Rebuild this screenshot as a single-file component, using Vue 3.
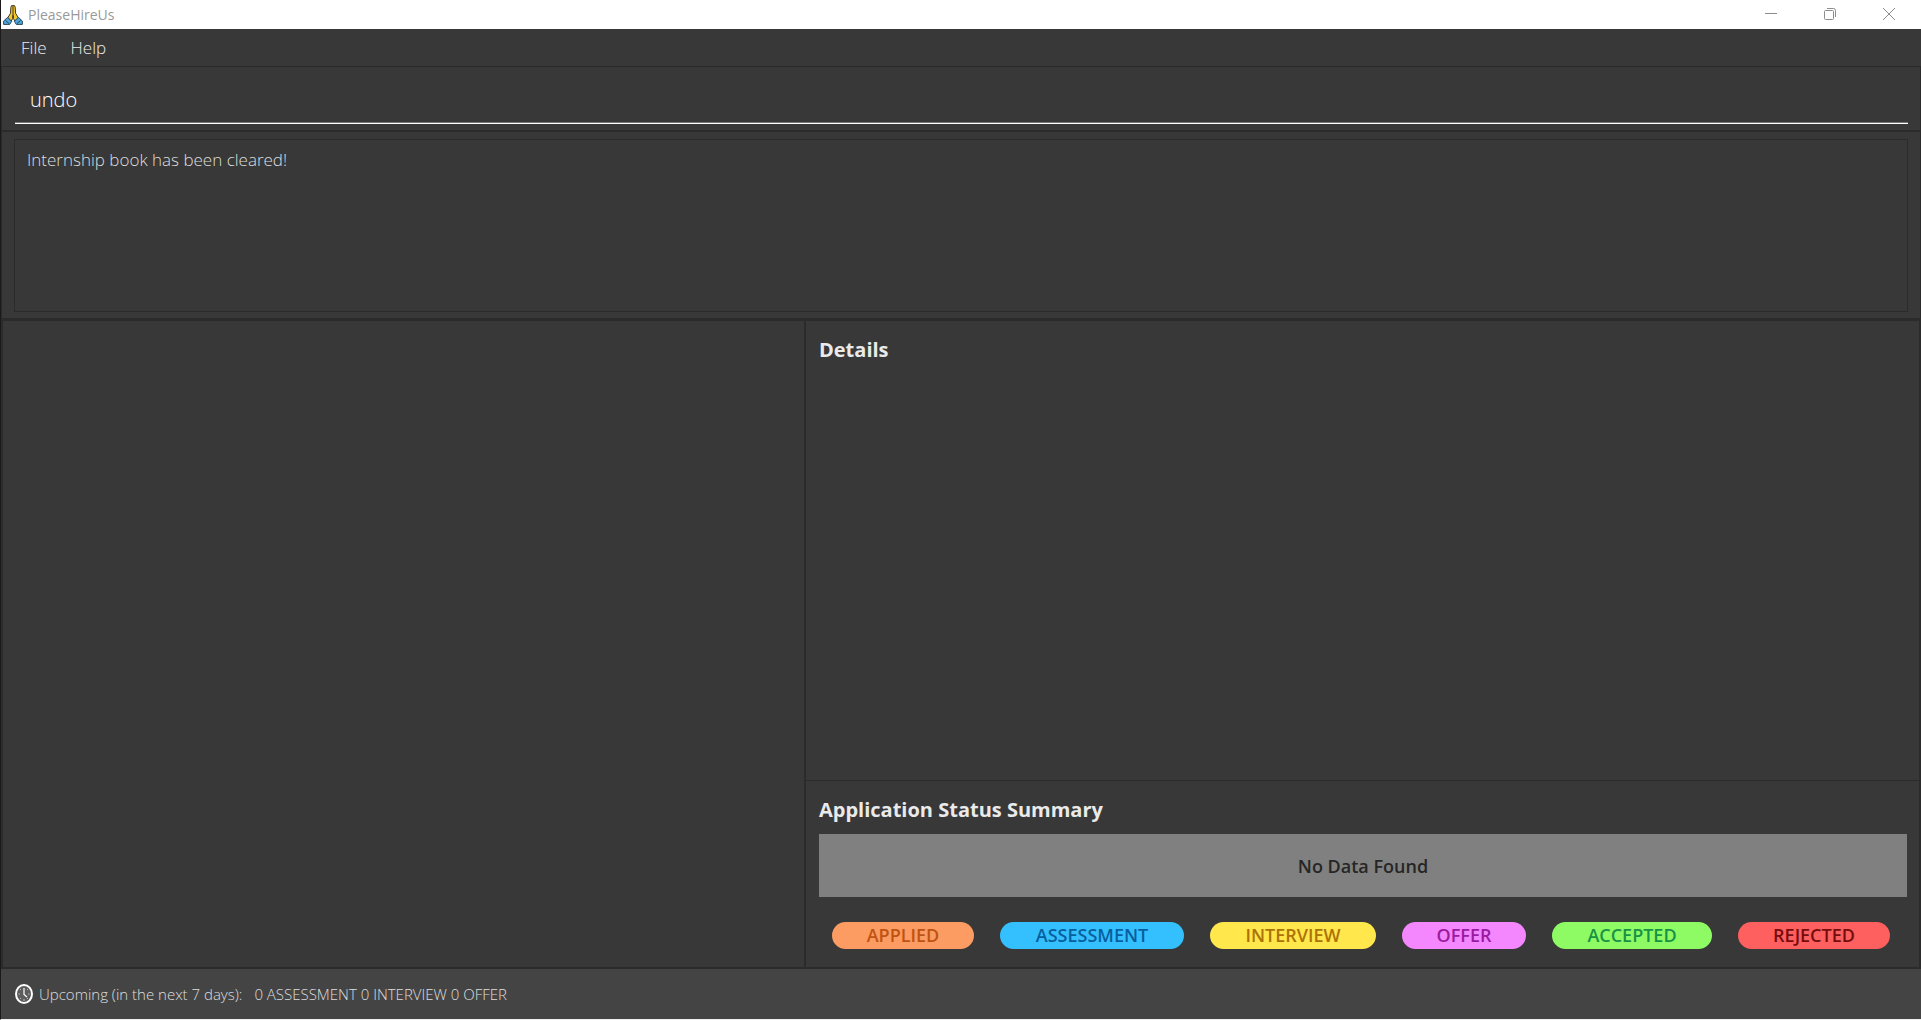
<script setup>
import { ref } from 'vue'

const command = ref('undo')
const menus = ['File', 'Help']
const statuses = ['Applied', 'Assessment', 'Interview', 'Offer', 'Accepted', 'Rejected']
</script>

<template>
  <div class="window">
    <header class="titlebar">
      <svg class="logo" viewBox="0 0 20 20" aria-hidden="true">
        <path d="M8.6 .6 9.8 .3 10 1 10.3 .3 11.5 .6 12.2 2.2 12.6 8.3 15.2 12.6 12.2 16.6 10.4 13.5V10.5H9.7V13.5L7.9 16.6 4.9 12.6 7.5 8.3 7.9 2.2Z" fill="#f5c92d" stroke="#3c3524" />
        <path d="M10 1V10.5" stroke="#3c3524" />
        <path d="M4.7 12.3 8.6 16.3 6.7 19.4H.6V16.1Z" fill="#4fa6dc" stroke="#28495c" />
        <path d="M15.3 12.3 11.4 16.3 13.3 19.4H19.4V16.1Z" fill="#4fa6dc" stroke="#28495c" />
        <path d="M2.5 15.5 6 18.5M17.5 15.5 14 18.5" stroke="#28495c" fill="none" />
      </svg>
      <span class="title">PleaseHireUs</span>
      <div class="controls">
        <button type="button" aria-label="Minimize">
          <svg viewBox="0 0 12 12"><path d="M0 5.5H12" /></svg>
        </button>
        <button type="button" aria-label="Restore">
          <svg viewBox="0 0 12 12"><rect x=".5" y="2.5" width="9" height="9" rx="1" /><path d="M3 .5H9.5Q11.5 .5 11.5 2.5V9" /></svg>
        </button>
        <button type="button" aria-label="Close">
          <svg viewBox="0 0 12 12"><path d="M0 0 12 12M12 0 0 12" /></svg>
        </button>
      </div>
    </header>

    <nav class="menubar">
      <button v-for="menu in menus" :key="menu" type="button">{{ menu }}</button>
    </nav>

    <form class="command" @submit.prevent>
      <input v-model="command" type="text" aria-label="Command" />
    </form>

    <section class="result">
      <p class="message">Internship book has been cleared!</p>
    </section>

    <main class="content">
      <section class="list" aria-label="Internships"></section>
      <div class="side">
        <section class="details">
          <h2>Details</h2>
        </section>
        <section class="summary">
          <h2>Application Status Summary</h2>
          <div class="chart">No Data Found</div>
          <ul class="legend">
            <li v-for="status in statuses" :key="status" :class="status.toLowerCase()">{{ status.toUpperCase() }}</li>
          </ul>
        </section>
      </div>
    </main>

    <footer class="statusbar">
      <svg class="clock" viewBox="0 0 18 20" aria-hidden="true">
        <ellipse cx="9" cy="10" rx="8" ry="9" fill="#5c5c5c" stroke="#fff" stroke-width="2" />
        <path d="M9 4V10.500L12 13" fill="none" stroke="#fff" stroke-width="1.200" />
        <path d="M3.500 10H5M13 10H14.500M9 15V17M5 5 6 6M13 5 12 6M5 15 6 14M13 15 12 14" stroke="#bbb" />
      </svg>
      <span>Upcoming (in the next 7 days):</span>
      <span class="counts">0 ASSESSMENT 0 INTERVIEW 0 OFFER</span>
    </footer>
  </div>
</template>

<style>
body {
  margin: 0;
  background: #fff;
}
</style>

<style scoped>
.window {
  box-sizing: border-box;
  display: flex;
  flex-direction: column;
  min-height: 100vh;
  border-left: 1px solid #1a1a1a;
  border-bottom: 1px solid #f0f0f0;
  background: #383838;
  color: #dedede;
  font-family: "Open Sans", "Noto Sans", sans-serif;
  font-weight: 300;
}

button {
  padding: 0;
  border: 0;
  background: none;
  color: inherit;
  font: inherit;
}

h2,
p,
ul {
  margin: 0;
  padding: 0;
}

.titlebar {
  display: flex;
  align-items: center;
  height: 29px;
  padding-left: 2px;
  background: #fff;
  color: #999;
}

.logo {
  width: 20px;
  height: 20px;
}

.title {
  margin-left: 5px;
  font-size: 14px;
  font-weight: 400;
}

.controls {
  display: flex;
  align-self: flex-start;
  margin-left: auto;
  padding-right: 3px;
}

.controls button {
  display: flex;
  align-items: center;
  justify-content: center;
  width: 59px;
  height: 28px;
}

.controls svg {
  width: 12px;
  height: 12px;
  fill: none;
  stroke: #8c8c8c;
}

.menubar {
  display: flex;
  gap: 24px;
  height: 37px;
  padding-left: 20px;
  color: #eee;
  font-size: 17px;
}

.command {
  padding: 14px 12px 6px 13px;
  border: 1px solid #2b2b2b;
  border-bottom-width: 2px;
}

.command input {
  box-sizing: border-box;
  display: block;
  width: 100%;
  height: 43px;
  padding: 0 15px 6px;
  border: 0;
  border-bottom: 1px solid #fff;
  outline: 0;
  background: none;
  box-shadow: inset 0 -1px #777;
  color: #fff;
  font: inherit;
  font-size: 20px;
}

.result {
  padding: 7px 12px 6px;
  border: 1px solid #2b2b2b;
  border-top: 0;
}

.message {
  box-sizing: border-box;
  height: 173px;
  padding: 8px 12px;
  border: 1px solid #2b2b2b;
  font-size: 17px;
  line-height: 24px;
}

.content {
  display: flex;
  flex: 1;
  border: 2px solid #2b2b2b;
}

.list {
  flex: 801;
  border-right: 2px solid #2b2b2b;
}

.side {
  display: flex;
  flex: 1113;
  flex-direction: column;
}

.details {
  flex: 1;
  padding: 14px 13px;
}

.summary {
  padding: 14px 12px 18px 13px;
  border-top: 1px solid #2b2b2b;
}

h2 {
  color: #eaeaea;
  font-size: 20px;
  font-weight: 700;
  line-height: 30px;
}

.chart {
  display: flex;
  align-items: center;
  justify-content: center;
  height: 63px;
  margin-top: 9px;
  background: #808080;
  color: #262626;
  font-size: 18px;
  font-weight: 600;
}

.legend {
  display: flex;
  gap: 26px;
  padding: 25px 17px 0 13px;
  list-style: none;
  font-size: 18px;
  font-weight: 600;
  line-height: 27px;
  text-align: center;
}

.legend li {
  border-radius: 14px;
}

.applied {
  flex: 142;
  background: #fc9c62;
  color: #bf5312;
}

.assessment {
  flex: 184;
  background: #34c0ff;
  color: #075f9e;
}

.interview {
  flex: 166;
  background: #ffe74c;
  color: #ad7208;
}

.offer {
  flex: 124;
  background: #f487fd;
  color: #991b9f;
}

.accepted {
  flex: 160;
  background: #8ffb64;
  color: #189246;
}

.rejected {
  flex: 152;
  background: #fe5f5f;
  color: #760c0c;
}

.statusbar {
  display: flex;
  align-items: center;
  height: 50px;
  padding-left: 14px;
  background: #444;
  font-size: 15px;
}

.clock {
  width: 18px;
  height: 20px;
  margin-right: 6px;
}

.counts {
  margin-left: 12px;
}
</style>
